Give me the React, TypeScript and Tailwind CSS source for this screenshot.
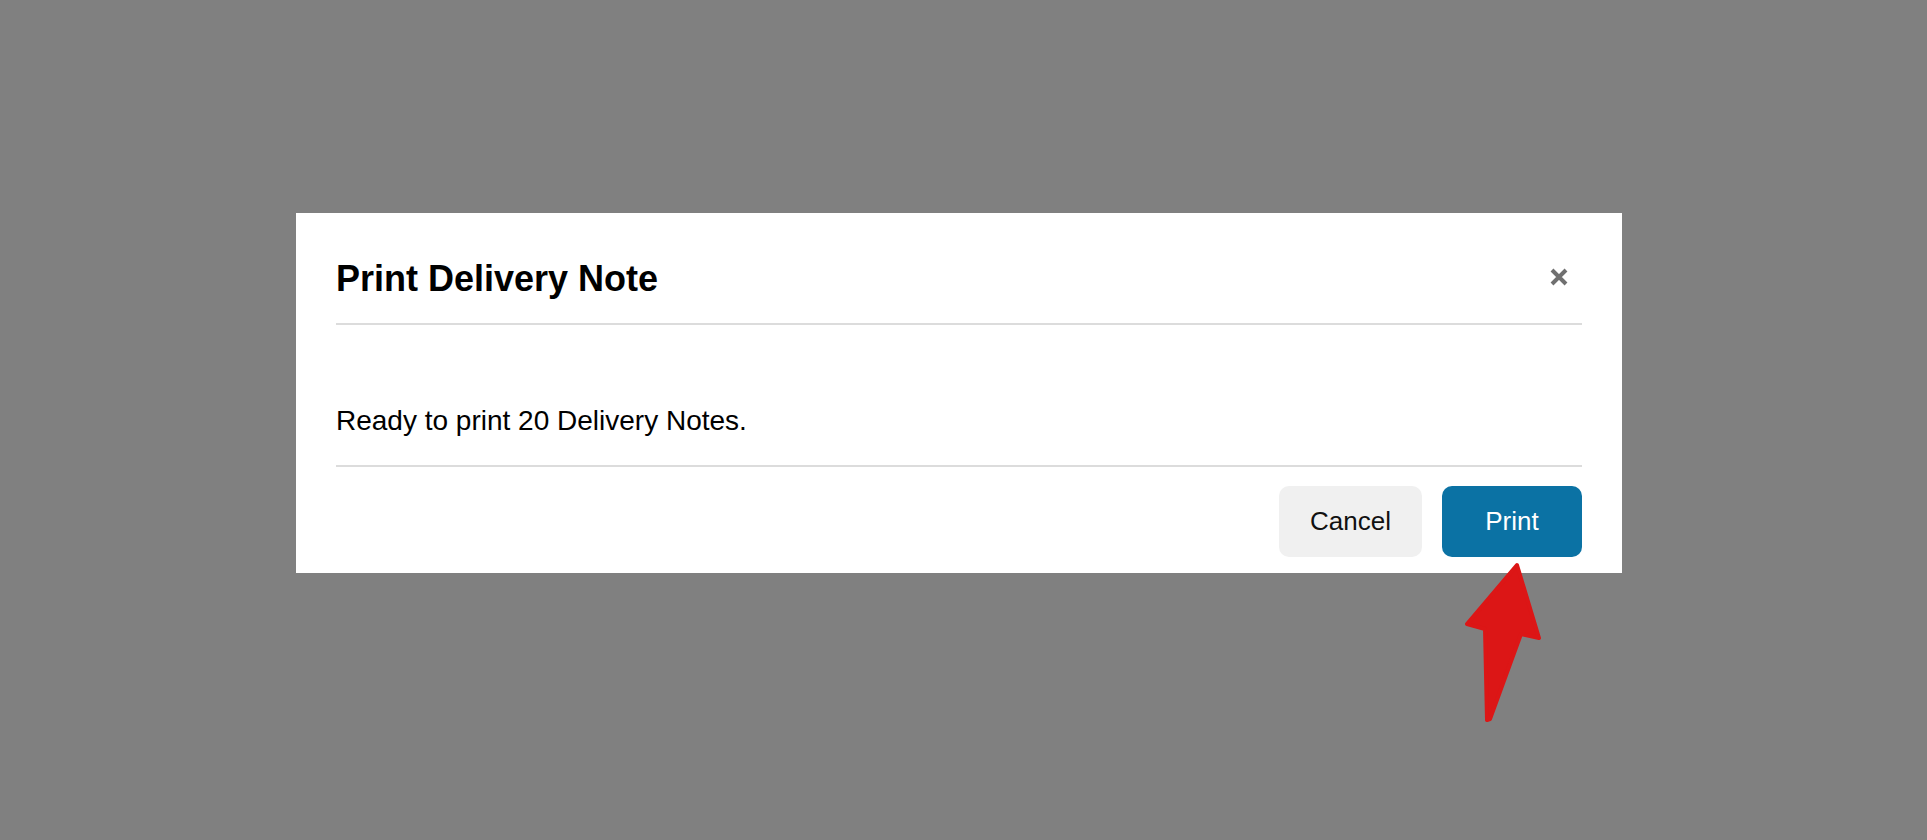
import React from 'react';

const font = { fontFamily: '"Liberation Sans", Arial, Helvetica, sans-serif' };

const CloseIcon = () => (
  <svg width="18" height="18" viewBox="0 0 18 18" className="block">
    <path d="M2 2 L16 16 M16 2 L2 16" stroke="#707070" strokeWidth="4" strokeLinecap="butt" />
  </svg>
);

// red pointer drawn on top of the page, aimed at the Print button
const PointerArrow = () => (
  <svg
    className="absolute left-0 top-0 pointer-events-none"
    width="1927"
    height="840"
    viewBox="0 0 1927 840"
  >
    <polygon
      points="1517,565 1539,638 1521,634 1490,719 1487,720 1485,629 1467,624"
      fill="#dc1616"
      stroke="#dc1616"
      strokeWidth="4"
      strokeLinejoin="round"
    />
  </svg>
);

export default function App() {
  return (
    <div className="relative w-full h-[840px] bg-[#808080] overflow-hidden" style={font}>
      <div className="pt-[213px] pl-[296px]">
        <div className="w-[1326px] bg-white px-[40px] pb-[16px]">
          <div className="flex items-center justify-between pt-[46px] pb-[24px] border-b-2 border-[#dcdcdc]">
            <h2 className="text-[36px] leading-[40px] font-bold text-black">Print Delivery Note</h2>
            <button className="mr-[14px] mt-[-5px]" aria-label="Close">
              <CloseIcon />
            </button>
          </div>
          <div className="pt-[80px] pb-[28px] border-b-2 border-[#dcdcdc]">
            <p className="text-[28px] leading-[32px] text-black">Ready to print 20 Delivery Notes.</p>
          </div>
          <div className="flex justify-end gap-[20px] pt-[19px]">
            <button className="w-[143px] h-[71px] rounded-[10px] bg-[#f0f0f0] text-[26px] text-[#111111]">
              Cancel
            </button>
            <button className="w-[140px] h-[71px] rounded-[10px] bg-[#0b72a4] text-[26px] text-white">
              Print
            </button>
          </div>
        </div>
      </div>
      <PointerArrow />
    </div>
  );
}
